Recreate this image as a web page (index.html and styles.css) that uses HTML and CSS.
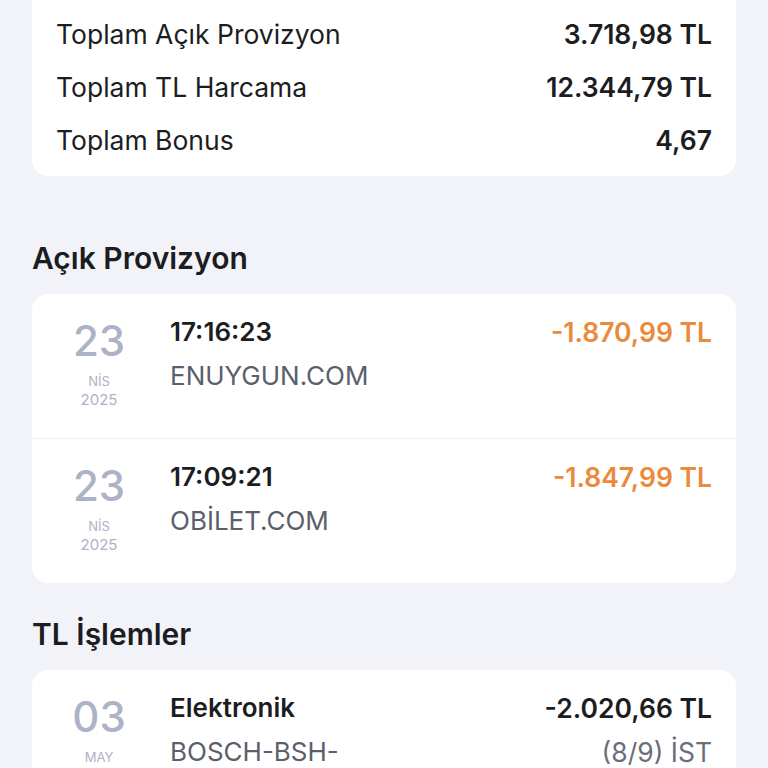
FILE: index.html
```html
<!DOCTYPE html>
<html lang="tr">
<head>
  <meta charset="UTF-8">
  <title>Kart Hareketleri</title>
  <link rel="stylesheet" href="styles.css">
</head>
<body>
  <div class="card summary">
    <div class="sum-row"><span>Toplam Açık Provizyon</span><b>3.718,98 TL</b></div>
    <div class="sum-row"><span>Toplam TL Harcama</span><b>12.344,79 TL</b></div>
    <div class="sum-row"><span>Toplam Bonus</span><b>4,67</b></div>
  </div>

  <h2 class="first">Açık Provizyon</h2>
  <div class="card">
    <div class="tx">
      <div class="date"><div class="day">23</div><div class="mon">NİS</div><div class="year">2025</div></div>
      <div class="info"><div class="title">17:16:23</div><div class="sub">ENUYGUN.COM</div></div>
      <div class="amt pending">-1.870,99 TL</div>
    </div>
    <div class="tx">
      <div class="date"><div class="day">23</div><div class="mon">NİS</div><div class="year">2025</div></div>
      <div class="info"><div class="title">17:09:21</div><div class="sub">OBİLET.COM</div></div>
      <div class="amt pending">-1.847,99 TL</div>
    </div>
  </div>

  <h2>TL İşlemler</h2>
  <div class="card">
    <div class="tx">
      <div class="date"><div class="day">03</div><div class="mon">MAY</div></div>
      <div class="info"><div class="title">Elektronik</div><div class="sub">BOSCH-BSH-</div></div>
      <div class="amt"><div>-2.020,66 TL</div><div class="inst">(8/9) İST</div></div>
    </div>
  </div>
</body>
</html>
```
FILE: styles.css
```css
body {
  margin: 0;
  background-color: #f2f3f8;
  font-family: Inter, "Noto Sans", sans-serif;
  color: #1c1d22;
  height: 768px;
  overflow: hidden;
}
.card {
  background-color: #fff;
  border-radius: 16px;
  margin: 0 32px;
}
.summary {
  margin-top: -16px;
  padding: 23px 24px 10px;
}
.sum-row {
  display: flex;
  justify-content: space-between;
  align-items: center;
  height: 53px;
  font-size: 26.5px;
}
.sum-row b {
  font-weight: 600;
}
h2 {
  font-size: 30px;
  font-weight: 600;
  margin: 33px 32px 18px;
}
h2.first {
  margin-top: 64px;
}
.tx {
  display: flex;
  align-items: flex-start;
  padding: 23px 24px 0;
  height: 121px;
  border-bottom: 1px solid #eef0f4;
}
.tx:last-child {
  border-bottom: none;
}
.date {
  width: 86px;
  text-align: center;
  color: #aeb2c6;
}
.day {
  font-size: 42px;
  font-weight: 500;
  line-height: 48px;
}
.mon {
  font-size: 13px;
  margin-top: 8px;
  line-height: 16px;
}
.year {
  font-size: 15px;
  line-height: 18px;
  margin-top: 2px;
}
.info {
  flex: 1;
  padding-left: 28px;
}
.title {
  font-size: 26px;
  font-weight: 600;
  line-height: 30px;
}
.sub {
  font-size: 26px;
  color: #5b5e6b;
  margin-top: 14px;
  line-height: 30px;
}
.amt {
  text-align: right;
  font-size: 26.5px;
  font-weight: 600;
  line-height: 30px;
}
.pending {
  color: #ea8a3c;
}
.inst {
  font-weight: 400;
  color: #6b6e79;
  margin-top: 14px;
}
```
